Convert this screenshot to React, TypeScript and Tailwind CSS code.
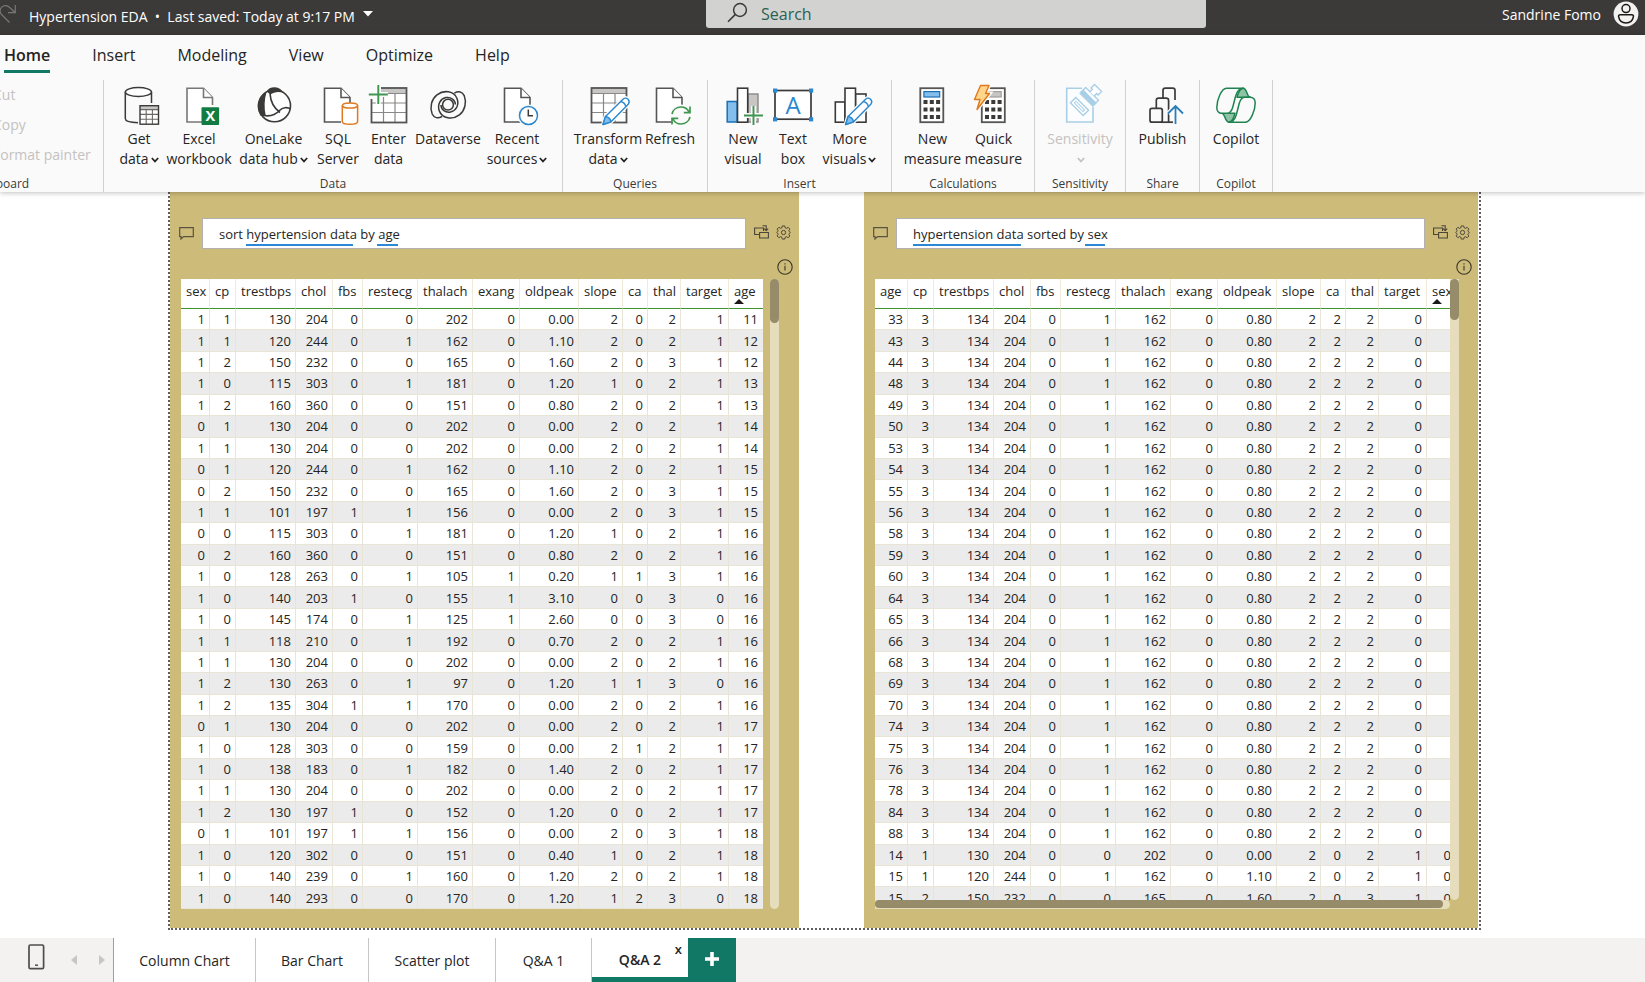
import React from "react";

const INK = "#3b3a39";

/* ---------- ribbon drawings ---------- */

function Icon({ children }: { children: React.ReactNode }) {
  return (
    <svg width="40" height="40" viewBox="0 0 40 40" fill="none" className="overflow-visible" aria-hidden="true">
      {children}
    </svg>
  );
}

function Doc({ x, stroke = "#555" }: { x: number; stroke?: string }) {
  return (
    <g transform={`translate(${x} 0)`} stroke={stroke} strokeWidth="1.6" fill="#fff">
      <path d="M26 20V12.5L17 3.3H0.5V37H17" />
      <path d="M17 3.3V12.5H26" />
    </g>
  );
}

function Grid({ x }: { x: number }) {
  return (
    <g transform={`translate(${x} 0)`}>
      <rect x="0.5" y="3" width="35" height="34.5" fill="#fff" />
      <rect x="0.5" y="3" width="35" height="5" fill="#c8c6c4" />
      <path d="M0.5 8.5H35.5M0.5 18H35.5M0.5 27.5H35.5M12.5 8.5V37M24 8.5V37" stroke="#8a8886" strokeWidth="1.2" />
      <rect x="0.5" y="3" width="35" height="34.5" stroke="#555" strokeWidth="1.8" />
    </g>
  );
}

function Plus({ x, y }: { x: number; y: number }) {
  return (
    <g transform={`translate(${x} ${y})`}>
      <path d="M-9.5 0H9.5M0 -9.5V9.5" stroke="#fafafa" strokeWidth="5" />
      <path d="M-9.5 0H9.5M0 -9.5V9.5" stroke="#3f9650" strokeWidth="1.9" />
    </g>
  );
}

function Pencil({ x, y }: { x: number; y: number }) {
  return (
    <g transform={`translate(${x} ${y})`} stroke="#2b88cf" strokeWidth="1.4" strokeLinejoin="round">
      <path d="M0 0L2.5 -8L20 -25.3C21.5 -26.6 23.5 -26.6 25 -25.2C26.4 -23.8 26.4 -21.8 25.2 -20.3L8 -2.7Z" fill="#fafafa" stroke="#fafafa" strokeWidth="4" />
      <path d="M0 0L2.5 -8L20 -25.3C21.5 -26.6 23.5 -26.6 25 -25.2C26.4 -23.8 26.4 -21.8 25.2 -20.3L8 -2.7Z" fill="#fff" />
      <path d="M0 0L2.5 -8C5 -7.6 7.4 -5.4 8 -2.7Z" fill="#83beec" />
      <path d="M17.6 -23C20 -22.6 22.2 -20.4 22.8 -18" />
    </g>
  );
}

const GetDataIcon = () => (
  <Icon>
    <path d="M6.3 7V33.5C6.3 35.8 11 37.5 19 37.7M32.5 7V18" stroke={INK} strokeWidth="1.5" />
    <ellipse cx="19.4" cy="7" rx="13.1" ry="4.4" fill="#fff" stroke={INK} strokeWidth="1.5" />
    <rect x="21" y="20.7" width="18.5" height="18.5" fill="#fff" />
    <rect x="21" y="20.7" width="18.5" height="3.6" fill="#c8c6c4" />
    <path d="M21 24.6H39.5M21 29.4H39.5M21 34.2H39.5M27.2 24.6V39M33.4 24.6V39" stroke="#6b6967" strokeWidth="1.1" />
    <rect x="21" y="20.7" width="18.5" height="18.5" stroke={INK} strokeWidth="1.4" />
  </Icon>
);

const ExcelIcon = () => (
  <Icon>
    <Doc x={7.5} stroke="#797775" />
    <rect x="22.5" y="22.3" width="17.6" height="17.6" rx="1" fill="#107c41" />
    <text x="31.3" y="36.4" textAnchor="middle" fontSize="14.5" fontWeight="700" fill="#fff" fontFamily="Open Sans, sans-serif">X</text>
  </Icon>
);

const OneLakeIcon = () => (
  <Icon>
    <circle cx="20.5" cy="20.8" r="16" fill="#fff" stroke={INK} strokeWidth="1.6" />
    <path d="M12.6 6.8C4.5 11 1.2 21 6 29.6L11.8 31C10 23 10.2 14.5 12.6 6.8Z" fill={INK} />
    <path d="M12.5 6.6C14 3.2 17.5 2 21 2.2C25 2.4 28 4.6 29.4 7.8C24 6 19.5 7.4 16.5 9.6Z" fill={INK} />
    <path d="M16 8.4C16.5 17 20.5 23.5 26 27.5M6 29.6C15 32.5 21 30.5 25.5 25.5C28.5 22.3 33.5 21.8 36.5 24" stroke={INK} strokeWidth="1.6" />
  </Icon>
);

const SqlIcon = () => (
  <Icon>
    <Doc x={6} />
    <path d="M24.3 20.5V36.5C24.3 40.2 39.6 40.2 39.6 36.5V20.5" fill="#fff" stroke="#e07a1f" strokeWidth="1.5" />
    <ellipse cx="32" cy="20.5" rx="7.6" ry="2.6" fill="#fff" stroke="#e07a1f" strokeWidth="1.5" />
  </Icon>
);

const EnterIcon = () => (
  <Icon>
    <Grid x={2} />
    <path d="M0 0H12V14H0Z" fill="#fafafa" />
    <Plus x={9.3} y={9.5} />
  </Icon>
);

const SWIRL = "M14 31.5C10 33.8 6 33 4.2 29C1.5 22 3.5 14 9 9.8C16 4.5 26 6 29 13.5C31.5 20 28 25.8 22.5 27C17.5 28 13 24.5 13 20";

const DataverseIcon = () => (
  <Icon>
    <g stroke={INK} strokeWidth="1.5">
      <circle cx="20" cy="19.7" r="5.4" />
      <path d={SWIRL} />
      <path d={SWIRL} transform="rotate(180 20.2 19.8)" />
    </g>
  </Icon>
);

const RecentIcon = () => (
  <Icon>
    <Doc x={7} />
    <circle cx="31.5" cy="30.5" r="11" fill="#fafafa" />
    <circle cx="31.5" cy="30.5" r="9" fill="#fff" stroke="#2b88cf" strokeWidth="1.5" />
    <path d="M31.3 24.5V30.8H36" stroke={INK} strokeWidth="1.5" />
  </Icon>
);

const TransformIcon = () => (
  <Icon>
    <Grid x={3} />
    <Pencil x={15} y={39.5} />
  </Icon>
);

const RefreshIcon = () => (
  <Icon>
    <Doc x={6} />
    <circle cx="31" cy="30.5" r="11" fill="#fafafa" />
    <g stroke="#3f9650" strokeWidth="1.7">
      <path d="M22 29C23 24.5 27 22 31 22C34.5 22 37.5 23.8 39 27M40 21.5V27.6H33.8" />
      <path d="M40 32C39 36.5 35 39 31 39C27.5 39 24.5 37.2 23 34M22 39.5V33.4H28.2" />
    </g>
  </Icon>
);

const NewVisualIcon = () => (
  <Icon>
    <rect x="4.2" y="16.5" width="10" height="20.5" fill="#83beec" stroke="#1b6fb5" strokeWidth="1.5" />
    <rect x="25" y="9" width="10" height="28" fill="#c8c6c4" stroke="#8a8886" strokeWidth="1.4" />
    <rect x="14.5" y="3.2" width="10.2" height="34" fill="#fff" stroke={INK} strokeWidth="1.6" />
    <Plus x={30.5} y={30.5} />
  </Icon>
);

const TextBoxIcon = () => (
  <Icon>
    <rect x="2" y="5.5" width="36" height="28.7" fill="#fff" stroke={INK} strokeWidth="1.7" />
    <g fill="#2b88cf">
      <rect x="0" y="3.5" width="4.2" height="4.2" />
      <rect x="36" y="3.5" width="4.2" height="4.2" />
      <rect x="0" y="32.2" width="4.2" height="4.2" />
      <rect x="36" y="32.2" width="4.2" height="4.2" />
    </g>
    <text x="20" y="28.5" textAnchor="middle" fontSize="24" fill="#2b88cf" fontFamily="Open Sans, sans-serif">A</text>
  </Icon>
);

const MoreVisualsIcon = () => (
  <Icon>
    <g fill="#fff" stroke={INK} strokeWidth="1.6">
      <rect x="5.3" y="17" width="9.7" height="20.2" />
      <rect x="25.5" y="9" width="10.5" height="28.2" />
      <rect x="15" y="3.2" width="10.5" height="34" />
    </g>
    <Pencil x={15.6} y={39.5} />
  </Icon>
);

function CalcBody({ x, display, edge }: { x: number; display: string; edge: string }) {
  return (
    <g transform={`translate(${x} 0)`}>
      <rect x="0.8" y="3.2" width="23" height="34" fill="#fff" stroke="#555" strokeWidth="1.8" />
      <rect x="4.4" y="6.6" width="15.8" height="5.4" fill={display} stroke={edge} strokeWidth="1.2" />
      {[15, 22.5, 30].map((y) =>
        [4, 10.3, 16.6].map((cx) => <rect key={`${cx}-${y}`} x={cx} y={y} width="4" height="4" fill={INK} />)
      )}
    </g>
  );
}

const NewMeasureIcon = () => (
  <Icon>
    <CalcBody x={6.5} display="#83beec" edge="#1b6fb5" />
  </Icon>
);

const QuickMeasureIcon = () => (
  <Icon>
    <CalcBody x={7} display="#c8c6c4" edge="#a19f9d" />
    <path d="M6.5 0.5H15L11.5 8.5H15.5L3 24.5L6 14.5H0.5Z" fill="#fafafa" stroke="#fafafa" strokeWidth="4" />
    <path d="M6.5 0.5H15L11.5 8.5H15.5L3 24.5L6 14.5H0.5Z" fill="#ffd68a" stroke="#e07a1f" strokeWidth="1.4" strokeLinejoin="round" />
  </Icon>
);

const SensitivityIcon = () => (
  <Icon>
    <path d="M33 22V37H6.7V3.2H22" fill="#fbfdfe" stroke="#a9cfe6" strokeWidth="1.6" />
    <g transform="translate(19.5 21.5) rotate(45)" stroke="#a9cfe6" strokeWidth="1.4" fill="#fff">
      <rect x="-9" y="-3.8" width="18" height="7.6" />
      <rect x="-6" y="-1.2" width="12" height="2.4" strokeWidth="1" />
    </g>
    <g transform="translate(31 10) rotate(45)" stroke="#a9cfe6" strokeWidth="1.4" fill="#fff">
      <rect x="-9" y="-1.5" width="18" height="6" />
      <rect x="-9" y="2.2" width="18" height="4.2" fill="#a9cfe6" />
      <path d="M-3 -1.5V-5H-5V-10H5V-5H3V-1.5" />
    </g>
  </Icon>
);

const PublishIcon = () => (
  <Icon>
    <g stroke={INK} strokeWidth="1.7">
      <path d="M20 13V5.5C20 4 21 3.2 22.3 3.2H29.7C31.2 3.2 32 4 32 5.5V15" />
      <path d="M13.3 23V15.5C13.3 14 14.3 13.2 15.6 13.2H23C24.5 13.2 25.6 14 25.6 15.5V37" />
      <rect x="7" y="23.3" width="12.3" height="13.9" rx="2" />
      <path d="M18 37.2H30" />
    </g>
    <path d="M32.5 39V21.5M25 28.5L32.5 21L40 28.5" stroke="#fafafa" strokeWidth="4.5" />
    <path d="M32.5 39V21.5M25 28.5L32.5 21L40 28.5" stroke="#2b7db8" strokeWidth="1.8" />
  </Icon>
);

const CopilotIcon = () => (
  <Icon>
    <g stroke="#1f8350" strokeWidth="1.5" strokeLinejoin="round">
      <path d="M21 12.3C22.5 6.5 24 3.2 27 3.2C31.5 3.2 30.5 12.3 34.5 12.3Z" fill="#8fc3a6" />
      <path d="M19 28.3C17.5 34 16 37.2 13 37.2C8.5 37.2 9.5 28.3 5.5 28.3Z" fill="#8fc3a6" />
      <path d="M27.5 3.2H10.5C5.5 3.2 0.8 15 0.8 22.5C0.8 26.5 3 28.3 6 28.3H11C14.5 28.3 15.8 25.8 16.8 22L19.5 11.5C21 5.5 23.5 3.2 27.5 3.2Z" fill="#fafafa" />
      <path d="M12.5 37.2H29.5C34.5 37.2 39.2 25.5 39.2 18C39.2 14 37 12.2 34 12.2H29C25.5 12.2 24.2 14.7 23.2 18.5L20.5 29C19 35 16.5 37.2 12.5 37.2Z" fill="#fafafa" />
    </g>
  </Icon>
);

function Chevron() {
  return (
    <svg width="8" height="6" viewBox="0 0 8 6" fill="none" className="ml-0.5 inline-block" aria-hidden="true">
      <path d="M0.8 1L4 4.4L7.2 1" stroke="currentColor" strokeWidth="1.7" />
    </svg>
  );
}

/* ---------- ribbon ---------- */

type Item = { icon: React.ReactNode; lines: string[]; width: string; menu?: boolean; disabled?: boolean };
type Group = { name: string; items: Item[] };

const groups: Group[] = [
  {
    name: "Data",
    items: [
      { icon: <GetDataIcon />, lines: ["Get", "data"], width: "w-[50px]", menu: true },
      { icon: <ExcelIcon />, lines: ["Excel", "workbook"], width: "w-[70px]" },
      { icon: <OneLakeIcon />, lines: ["OneLake", "data hub"], width: "w-[79px]", menu: true },
      { icon: <SqlIcon />, lines: ["SQL", "Server"], width: "w-[50px]" },
      { icon: <EnterIcon />, lines: ["Enter", "data"], width: "w-[51px]" },
      { icon: <DataverseIcon />, lines: ["Dataverse"], width: "w-[68px]" },
      { icon: <RecentIcon />, lines: ["Recent", "sources"], width: "w-[70px]", menu: true },
    ],
  },
  {
    name: "Queries",
    items: [
      { icon: <TransformIcon />, lines: ["Transform", "data"], width: "w-[70px]", menu: true },
      { icon: <RefreshIcon />, lines: ["Refresh"], width: "w-[54px]" },
    ],
  },
  {
    name: "Insert",
    items: [
      { icon: <NewVisualIcon />, lines: ["New", "visual"], width: "w-[50px]" },
      { icon: <TextBoxIcon />, lines: ["Text", "box"], width: "w-[50px]" },
      { icon: <MoreVisualsIcon />, lines: ["More", "visuals"], width: "w-[63px]", menu: true },
    ],
  },
  {
    name: "Calculations",
    items: [
      { icon: <NewMeasureIcon />, lines: ["New", "measure"], width: "w-[61px]" },
      { icon: <QuickMeasureIcon />, lines: ["Quick", "measure"], width: "w-[61px]" },
    ],
  },
  {
    name: "Sensitivity",
    items: [{ icon: <SensitivityIcon />, lines: ["Sensitivity", ""], width: "w-[70px]", menu: true, disabled: true }],
  },
  { name: "Share", items: [{ icon: <PublishIcon />, lines: ["Publish"], width: "w-[53px]" }] },
  { name: "Copilot", items: [{ icon: <CopilotIcon />, lines: ["Copilot"], width: "w-[52px]" }] },
];

function RibbonButton({ item }: { item: Item }) {
  return (
    <button
      type="button"
      disabled={item.disabled}
      className={`${item.width} flex flex-col items-center text-[14px] leading-[20px] text-[#252423] disabled:text-[#c4c2c0]`}
    >
      <span className="mb-1">{item.icon}</span>
      {item.lines.map((line, i) => (
        <span key={i} className="whitespace-nowrap">
          {line}
          {item.menu && i === item.lines.length - 1 && <Chevron />}
        </span>
      ))}
    </button>
  );
}

function Ribbon() {
  return (
    <div className="flex h-[116px] overflow-hidden pt-1">
      <section className="-ml-[99px] flex h-[112px] w-[203px] shrink-0 flex-col justify-between border-r border-[#d2d0ce]">
        <div className="flex flex-col items-start pl-[92px] text-[14px] leading-[30px] text-[#c4c2c0]">
          <button type="button" disabled>Cut</button>
          <button type="button" disabled>Copy</button>
          <button type="button" disabled className="whitespace-nowrap">Format painter</button>
        </div>
        <h2 className="text-center text-[12px] leading-[16px] text-[#3b3a39]">Clipboard</h2>
      </section>
      {groups.map((g) => (
        <section key={g.name} className="flex h-[112px] shrink-0 flex-col justify-between border-r border-[#d2d0ce] px-2.5 pt-[5px]">
          <div className="flex items-start">
            {g.items.map((item) => (
              <RibbonButton key={item.lines.join(" ") + g.name} item={item} />
            ))}
          </div>
          <h2 className="text-center text-[12px] leading-[16px] text-[#3b3a39]">{g.name}</h2>
        </section>
      ))}
    </div>
  );
}

/* ---------- report data ---------- */

const leftRows = `1 1 130 204 0 0 202 0 0.00 2 0 2 1 11
1 1 120 244 0 1 162 0 1.10 2 0 2 1 12
1 2 150 232 0 0 165 0 1.60 2 0 3 1 12
1 0 115 303 0 1 181 0 1.20 1 0 2 1 13
1 2 160 360 0 0 151 0 0.80 2 0 2 1 13
0 1 130 204 0 0 202 0 0.00 2 0 2 1 14
1 1 130 204 0 0 202 0 0.00 2 0 2 1 14
0 1 120 244 0 1 162 0 1.10 2 0 2 1 15
0 2 150 232 0 0 165 0 1.60 2 0 3 1 15
1 1 101 197 1 1 156 0 0.00 2 0 3 1 15
0 0 115 303 0 1 181 0 1.20 1 0 2 1 16
0 2 160 360 0 0 151 0 0.80 2 0 2 1 16
1 0 128 263 0 1 105 1 0.20 1 1 3 1 16
1 0 140 203 1 0 155 1 3.10 0 0 3 0 16
1 0 145 174 0 1 125 1 2.60 0 0 3 0 16
1 1 118 210 0 1 192 0 0.70 2 0 2 1 16
1 1 130 204 0 0 202 0 0.00 2 0 2 1 16
1 2 130 263 0 1 97 0 1.20 1 1 3 0 16
1 2 135 304 1 1 170 0 0.00 2 0 2 1 16
0 1 130 204 0 0 202 0 0.00 2 0 2 1 17
1 0 128 303 0 0 159 0 0.00 2 1 2 1 17
1 0 138 183 0 1 182 0 1.40 2 0 2 1 17
1 1 130 204 0 0 202 0 0.00 2 0 2 1 17
1 2 130 197 1 0 152 0 1.20 0 0 2 1 17
0 1 101 197 1 1 156 0 0.00 2 0 3 1 18
1 0 120 302 0 0 151 0 0.40 1 0 2 1 18
1 0 140 239 0 1 160 0 1.20 2 0 2 1 18
1 0 140 293 0 0 170 0 1.20 1 2 3 0 18`
  .split("\n")
  .map((r) => r.split(" "));

const repeatedAges = [33, 43, 44, 48, 49, 50, 53, 54, 55, 56, 58, 59, 60, 64, 65, 66, 68, 69, 70, 74, 75, 76, 78, 84, 88];

const rightRows = [
  ...repeatedAges.map((age) => `${age} 3 134 204 0 1 162 0 0.80 2 2 2 0 `.split(" ")),
  "14 1 130 204 0 0 202 0 0.00 2 0 2 1 0".split(" "),
  "15 1 120 244 0 1 162 0 1.10 2 0 2 1 0".split(" "),
  "15 2 150 232 0 0 165 0 1.60 2 0 3 1 0".split(" "),
];

type Column = { name: string; width: string };

const middle: Column[] = [
  { name: "cp", width: "w-[26px]" },
  { name: "trestbps", width: "w-[60px]" },
  { name: "chol", width: "w-[37px]" },
  { name: "fbs", width: "w-[30px]" },
  { name: "restecg", width: "w-[55px]" },
  { name: "thalach", width: "w-[55px]" },
  { name: "exang", width: "w-[47px]" },
  { name: "oldpeak", width: "w-[59px]" },
  { name: "slope", width: "w-[44px]" },
  { name: "ca", width: "w-[25px]" },
  { name: "thal", width: "w-[33px]" },
  { name: "target", width: "w-[48px]" },
];

const leftColumns: Column[] = [{ name: "sex", width: "w-[29px]" }, ...middle, { name: "age", width: "w-[34px]" }];
const rightColumns: Column[] = [{ name: "age", width: "w-[33px]" }, ...middle, { name: "sex", width: "w-[29px]" }];

function DataTable({ columns, rows, width, label }: { columns: Column[]; rows: string[][]; width: string; label: string }) {
  return (
    <table aria-label={label} className={`${width} h-[630px] shrink-0 table-fixed border-separate border-spacing-0 bg-white text-[13px] leading-[16px] text-[#252423]`}>
      <thead>
        <tr>
          {columns.map((c, i) => (
            <th
              key={c.name}
              aria-sort={i === columns.length - 1 ? "ascending" : undefined}
              className={`${c.width} relative h-[30px] border-r border-b border-r-[#f0ead8] border-b-[#3f9430] px-[5px] pb-[6px] text-left align-middle font-normal whitespace-nowrap last:border-r-0`}
            >
              {c.name}
              {i === columns.length - 1 && (
                <svg width="10" height="5" viewBox="0 0 10 5" className="absolute bottom-1 left-[5px]" aria-hidden="true">
                  <path d="M0 5L5 0L10 5Z" fill="#1b1a19" />
                </svg>
              )}
            </th>
          ))}
        </tr>
      </thead>
      <tbody>
        {rows.map((r, i) => (
          <tr key={i} className="odd:bg-white even:bg-[#ebebeb]">
            {r.map((v, j) => (
              <td key={j} className="border-r border-b border-[#e8e4d6] pr-1 text-right last:border-r-0 last:pr-[5px]">
                {v}
              </td>
            ))}
          </tr>
        ))}
      </tbody>
    </table>
  );
}

function QuestionBar({ value, marks }: { value: string; marks: string[] }) {
  return (
    <div className="flex items-center">
      <svg width="15" height="13" viewBox="0 0 15 13" fill="none" className="mr-2 shrink-0" aria-hidden="true">
        <path d="M0.7 0.7H14.3V9.6H4.6L2 12V9.6H0.7Z" stroke="#5b5340" strokeWidth="1.2" />
      </svg>
      <div className="relative flex-1">
        <input
          type="text"
          aria-label="Ask a question about your data"
          defaultValue={value}
          className="block h-[31px] w-full border border-[#b3b0ad] bg-white px-4 text-[13px] text-[#252423] outline-none"
        />
        {marks.map((m) => (
          <span key={m} className={`absolute top-[26px] h-[2px] bg-[#2b88d8] ${m}`} />
        ))}
      </div>
      <button type="button" aria-label="Turn this result into a standard visual" className="mb-[3px] ml-2">
        <svg width="15" height="14" viewBox="0 0 15 14" fill="none" stroke="#4c4638" strokeWidth="1.1" className="block">
          <path d="M5 9.5H0.6V3H9.5V6M5.6 7.5H14.4V13H5.6ZM8.5 0.8H12.2V5M10.2 3.6L12.2 5.6L14.2 3.6" />
        </svg>
      </button>
      <button type="button" aria-label="Settings" className="mb-[3px] ml-[7px]">
        <svg width="15" height="15" viewBox="0 0 24 24" fill="none" stroke="#4c4638" strokeWidth="1.6" strokeLinejoin="round" className="block">
          <path d="M10 1.5H14L14.7 4.6L16.7 5.4L19.4 3.7L22.2 6.5L20.5 9.2L21.2 10.5L23 12L21.2 13.6L20.5 15L22.2 17.6L19.4 20.4L16.7 18.7L14.7 19.5L14 22.5H10L9.3 19.4L7.3 18.6L4.6 20.3L1.8 17.5L3.5 14.8L2.8 13.5L1 12L2.8 10.4L3.5 9.2L1.8 6.5L4.6 3.7L7.3 5.4L9.3 4.6Z" />
          <circle cx="12" cy="12" r="3.4" />
        </svg>
      </button>
    </div>
  );
}

function InfoButton() {
  return (
    <button type="button" aria-label="Information" className="-mr-0.5 block">
      <svg width="16" height="16" viewBox="0 0 16 16" fill="none" stroke="#3b3629" strokeWidth="1.1" className="block">
        <circle cx="8" cy="8" r="7.2" />
        <path d="M8 6.8V11.5M8 4.2V5.5" />
      </svg>
    </button>
  );
}

function Canvas() {
  return (
    <main className="flex-1 bg-white pr-[164px] pb-2 pl-[168px]">
      <div className="grid grid-cols-[629fr_614fr] gap-[65px] border-2 border-t-0 border-dotted border-[#605e5c] pr-px">
        <section className="h-[736px] min-w-0 bg-[#cdbb79] pt-[26px] pr-[8px] pl-[9px]">
          <QuestionBar value="sort hypertension data by age" marks={["left-[44px] w-[107px]", "left-[175px] w-[21px]"]} />
          <div className="flex justify-end pt-[10px] pb-1">
            <InfoButton />
          </div>
          <div className="flex gap-[7px] pl-[2px]">
            <DataTable label="Hypertension data sorted by age" columns={leftColumns} rows={leftRows} width="w-[582px]" />
            <div className="h-[630px] w-[9px] rounded-full bg-[#e6ddbc]">
              <div className="h-[44px] rounded-full bg-[#968c69]" />
            </div>
          </div>
        </section>
        <section className="h-[736px] min-w-0 bg-[#cdbb79] pt-[26px] pr-[8px] pl-[9px]">
          <QuestionBar value="hypertension data sorted by sex" marks={["left-[17px] w-[108px]", "left-[189px] w-[20px]"]} />
          <div className="flex justify-end pt-[10px] pb-1">
            <InfoButton />
          </div>
          <div className="flex pl-[2px]">
            <div className="w-[575px]">
              <div className="h-[621px] overflow-hidden">
                <DataTable label="Hypertension data sorted by sex" columns={rightColumns} rows={rightRows} width="w-[581px]" />
              </div>
              <div className="h-[9px] rounded-r-full bg-[#e6ddbc]">
                <div className="h-[8px] w-[568px] rounded-full bg-[#968c69]" />
              </div>
            </div>
            <div className="h-[621px] w-[9px] rounded-b-full bg-[#e6ddbc]">
              <div className="h-[41px] rounded-full bg-[#968c69]" />
            </div>
          </div>
        </section>
      </div>
    </main>
  );
}

/* ---------- frame ---------- */

function TitleBar() {
  return (
    <header className="grid h-[35px] grid-cols-[706fr_500px_439fr] items-start bg-[#3b3a39] text-[14px] text-white">
      <div className="flex items-start">
        <svg width="17" height="24" viewBox="0 0 17 24" fill="none" className="shrink-0" aria-hidden="true">
          <path d="M9.5 22.5L1.5 14.5C-1 11.5 0 7.5 3.5 6C6 5 8.5 6.2 10 7.8L15 12.5M15.3 5V12.7H8" stroke="#797775" strokeWidth="1.2" />
        </svg>
        <button type="button" className="ml-3 flex h-8 items-center whitespace-nowrap">
          Hypertension EDA&nbsp; •&nbsp; Last saved: Today at 9:17 PM
          <svg width="10" height="6" viewBox="0 0 10 6" className="mb-1 ml-2" aria-hidden="true">
            <path d="M0 0H10L5 5.5Z" fill="#fff" />
          </svg>
        </button>
      </div>
      <label className="flex h-7 items-center rounded-b-[3px] bg-[#d2d2d0] pl-[21px]">
        <svg width="21" height="21" viewBox="0 0 21 21" fill="none" className="mb-1 shrink-0" aria-hidden="true">
          <circle cx="13" cy="8" r="6.4" stroke={INK} strokeWidth="1.5" />
          <path d="M8.4 12.4L1 19.8" stroke={INK} strokeWidth="1.6" />
        </svg>
        <input
          type="search"
          aria-label="Search"
          placeholder="Search"
          className="ml-[13px] w-full bg-transparent text-[16px] outline-none placeholder:text-[#2c5f53]"
        />
      </label>
      <button type="button" className="flex h-7 items-center justify-end whitespace-nowrap">
        Sandrine Fomo
        <svg width="26" height="26" viewBox="0 0 26 26" fill="none" className="mr-[6px] ml-3" aria-hidden="true">
          <circle cx="13" cy="13" r="12.4" fill="#f3f2f1" />
          <circle cx="13" cy="7.6" r="4" stroke="#1b1a19" strokeWidth="1.5" />
          <path d="M7.2 13.8H18.8C20 13.8 20.6 14.5 20.4 15.6C19.7 19.6 17 21.9 13 21.9C9 21.9 6.3 19.6 5.6 15.6C5.4 14.5 6 13.8 7.2 13.8Z" stroke="#1b1a19" strokeWidth="1.5" />
        </svg>
      </button>
    </header>
  );
}

function MenuTabs() {
  return (
    <nav className="flex h-[41px] gap-[42px] pl-1 text-[16px] text-[#252423]">
      <button type="button" className="h-[38px] border-b-[3px] border-[#117865] pt-1 font-semibold">Home</button>
      {["Insert", "Modeling", "View", "Optimize", "Help"].map((t) => (
        <button key={t} type="button" className="h-[38px] pt-0.5">{t}</button>
      ))}
    </nav>
  );
}

function PageTabs() {
  const tab = "border-r border-[#c8c6c4] bg-white";
  return (
    <footer className="flex h-[44px] bg-[#f3f2f1] text-[14px] text-[#252423]">
      <div className="flex w-[114px] items-center border-r border-[#a19f9d]">
        <svg width="17" height="26" viewBox="0 0 17 26" fill="none" className="mb-[6px] ml-[28px]" aria-hidden="true">
          <rect x="1" y="1" width="14.6" height="23.6" rx="1.4" stroke="#4f4d4b" strokeWidth="1.7" />
          <path d="M7 21.2H10" stroke="#4f4d4b" strokeWidth="1.5" />
        </svg>
        <button type="button" aria-label="Previous page" className="ml-[26px]">
          <svg width="6" height="10" viewBox="0 0 6 10" className="block"><path d="M6 0V10L0 5Z" fill="#c8c6c4" /></svg>
        </button>
        <button type="button" aria-label="Next page" className="ml-[22px]">
          <svg width="6" height="10" viewBox="0 0 6 10" className="block"><path d="M0 0V10L6 5Z" fill="#c8c6c4" /></svg>
        </button>
      </div>
      <button type="button" className={`${tab} w-[142px]`}>Column Chart</button>
      <button type="button" className={`${tab} w-[113px]`}>Bar Chart</button>
      <button type="button" className={`${tab} w-[127px]`}>Scatter plot</button>
      <button type="button" className={`${tab} w-[96px]`}>Q&amp;A 1</button>
      <div className="relative flex w-[96px] border-b-[5px] border-[#117865] bg-white">
        <button type="button" className="w-full pt-1 font-semibold">Q&amp;A 2</button>
        <button type="button" aria-label="Delete page" className="absolute top-[3px] right-[6px] text-[13px] leading-[16px] font-semibold">x</button>
      </div>
      <button type="button" aria-label="New page" className="flex w-[48px] items-center justify-center bg-[#117865]">
        <svg width="14" height="14" viewBox="0 0 14 14" className="mb-[3px]"><path d="M7 0V14M0 7H14" stroke="#fff" strokeWidth="3.6" /></svg>
      </button>
    </footer>
  );
}

export default function App() {
  return (
    <div className="flex min-h-screen flex-col overflow-hidden bg-white font-['Open_Sans','Noto_Sans',sans-serif]">
      <TitleBar />
      <div className="relative bg-[#fafafa] shadow-[0_1px_5px_rgba(0,0,0,0.25)]">
        <MenuTabs />
        <Ribbon />
      </div>
      <Canvas />
      <PageTabs />
    </div>
  );
}
